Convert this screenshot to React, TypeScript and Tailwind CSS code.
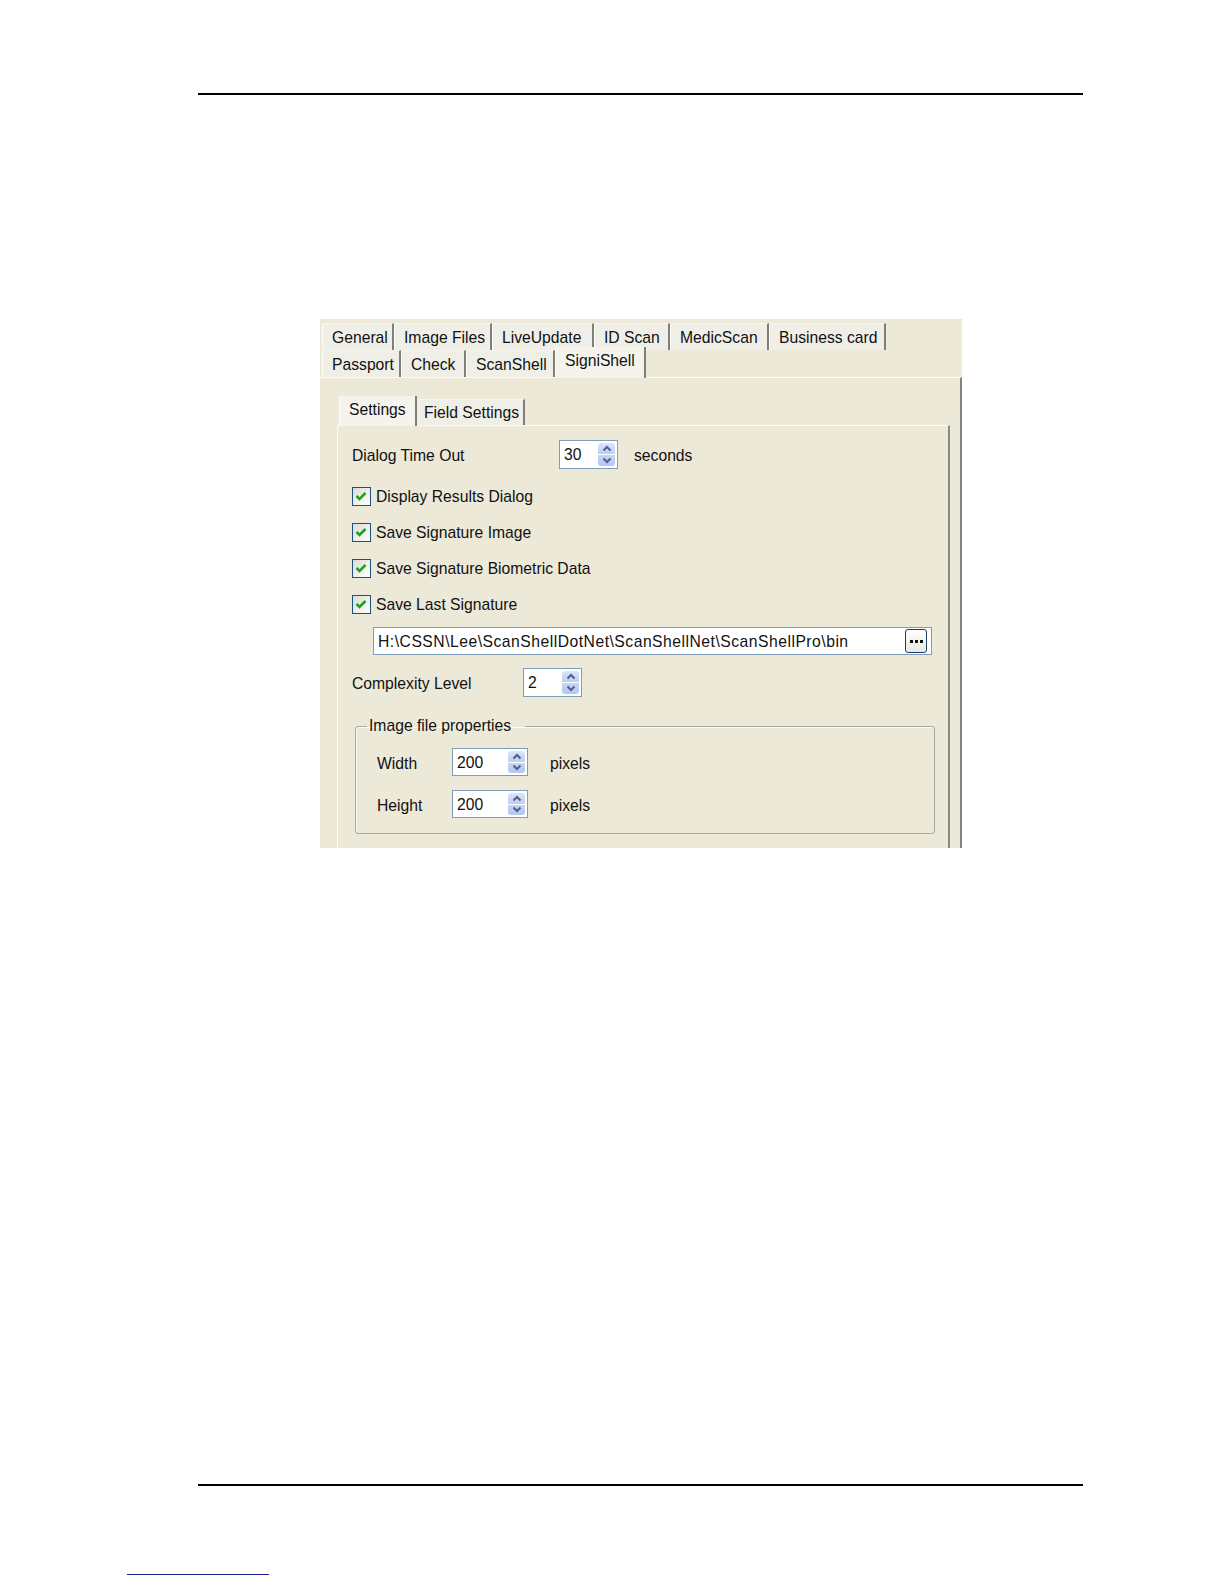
import React from "react";

// multi-row tab strip of the options dialog
const rowOne = [
  { label: "General", w: "w-[72px]" },
  { label: "Image Files", w: "w-[98px]" },
  { label: "LiveUpdate", w: "w-[102px]" },
  { label: "ID Scan", w: "w-[76px]" },
  { label: "MedicScan", w: "w-[99px]" },
  { label: "Business card", w: "w-[117px]" },
];

const rowTwo = [
  { label: "Passport", w: "w-[79px]" },
  { label: "Check", w: "w-[65px]" },
  { label: "ScanShell", w: "w-[89px]" },
];

const checks = [
  "Display Results Dialog",
  "Save Signature Image",
  "Save Signature Biometric Data",
  "Save Last Signature",
];

function Tab({ label, w, top }: { label: string; w: string; top: string }) {
  return (
    <div
      className={`${w} ${top} h-[27px] shrink-0 rounded-tl-[2px] border-l border-t border-l-[#fbfbf7] border-t-[#f7f6f1] border-r-2 border-r-[#807f76] bg-[#f0efe7] pl-[9px] whitespace-nowrap`}
    >
      {label}
    </div>
  );
}

function Arrow({ up }: { up?: boolean }) {
  return (
    <svg width="10" height="7" viewBox="0 0 10 7">
      <path
        d={up ? "M1.5 5.5 L5 2 L8.5 5.5" : "M1.5 1.5 L5 5 L8.5 1.5"}
        fill="none"
        stroke="#4d6185"
        strokeWidth="2"
      />
    </svg>
  );
}

function Spin({ value, w, h }: { value: string; w: string; h: string }) {
  return (
    <div className={`${w} ${h} flex shrink-0 items-center border border-[#7f9db9] bg-white pl-[4px] pr-[2px]`}>
      <span className="flex-1 pt-[1px]">{value}</span>
      <div className="flex h-[calc(100%-4px)] w-[17px] flex-col gap-px">
        <div className="flex flex-1 items-center justify-center rounded-t-[3px] bg-gradient-to-b from-[#dbe5fc] to-[#bccdf5]">
          <Arrow up />
        </div>
        <div className="flex flex-1 items-center justify-center rounded-b-[3px] bg-gradient-to-b from-[#c6d5f8] to-[#b3c6f2]">
          <Arrow />
        </div>
      </div>
    </div>
  );
}

function Check({ label }: { label: string }) {
  return (
    <div className="flex h-[19px] items-center">
      <div className="flex h-[19px] w-[19px] shrink-0 items-center justify-center border border-[#1c5180] bg-gradient-to-br from-[#dcdcd6] to-white">
        <svg width="17" height="17" viewBox="0 0 17 17">
          <path d="M3.5 8 L6.5 11 L12.5 5" fill="none" stroke="#21a121" strokeWidth="2.6" />
        </svg>
      </div>
      <span className="ml-[5px] whitespace-nowrap">{label}</span>
    </div>
  );
}

export default function App() {
  return (
    <div className="flex h-[1584px] w-[1224px] flex-col overflow-hidden bg-white font-['Liberation_Sans',Arial,sans-serif]">
      <div className="ml-[198px] mt-[93px] h-[2px] w-[885px] bg-black" />

      {/* dialog screenshot */}
      <div className="ml-[320px] mt-[224px] flex h-[529px] w-[642px] flex-col overflow-hidden bg-[#ece9d8] text-[15.7px] leading-[18px] text-[#111]">
        <div className="pl-[2px] pt-[4px]">
          <div className="flex h-[27px]">
            {rowOne.map((t) => (
              <Tab key={t.label} label={t.label} w={t.w} top="pt-[5px]" />
            ))}
          </div>
          <div className="flex h-[27px] items-end">
            {rowTwo.map((t) => (
              <Tab key={t.label} label={t.label} w={t.w} top="pt-[5px]" />
            ))}
            <div className="relative z-10 -mb-px h-[31px] w-[91px] shrink-0 rounded-tl-[2px] border-l border-l-[#fdfdfb] border-r-2 border-r-[#807f76] bg-[#f4f3ec] pl-[9px] pt-[5px]">
              SigniShell
            </div>
          </div>
        </div>

        <div className="flex flex-1 flex-col border-t border-r-2 border-t-[#fbfbf8] border-r-[#85847a] pl-[17px] pr-[10px] pt-[21px]">
          <div className="flex h-[26px] items-end pl-[2px]">
            <div className="relative z-10 -mb-px h-[30px] w-[78px] shrink-0 rounded-tl-[2px] border-l border-l-[#fdfdfb] border-r-2 border-r-[#807f76] bg-[#f4f3ec] pl-[9px] pt-[5px]">
              Settings
            </div>
            <div className="h-[26px] w-[108px] shrink-0 border-t border-t-[#f7f6f1] border-r-2 border-r-[#807f76] bg-[#f0efe7] pl-[7px] pt-[4px] whitespace-nowrap">
              Field Settings
            </div>
          </div>

          <div className="flex flex-1 flex-col border-l border-t border-r-2 border-l-[#fbfbf8] border-t-[#fbfbf8] border-r-[#8b8a80] pl-[14px]">
            <div className="mt-[14px] flex h-[29px] items-center">
              <span className="w-[207px] shrink-0 pt-[2px]">Dialog Time Out</span>
              <Spin value="30" w="w-[59px]" h="h-[29px]" />
              <span className="ml-[16px] pt-[2px]">seconds</span>
            </div>

            <div className="mt-[18px] flex flex-col gap-[17px]">
              {checks.map((c) => (
                <Check key={c} label={c} />
              ))}
            </div>

            <div className="ml-[21px] mt-[13px] flex h-[28px] w-[559px] items-center border border-[#7f9db9] bg-white pl-[4px] pr-[4px]">
              <span className="flex-1 whitespace-nowrap pt-[1px] tracking-[0.5px]">
                H:\CSSN\Lee\ScanShellDotNet\ScanShellNet\ScanShellPro\bin
              </span>
              <div className="flex h-[24px] w-[22px] items-center justify-center gap-[2px] rounded-[3px] border border-[#1f3a63] bg-gradient-to-b from-white to-[#e9e8e2]">
                <span className="h-[3px] w-[3px] bg-[#111]" />
                <span className="h-[3px] w-[3px] bg-[#111]" />
                <span className="h-[3px] w-[3px] bg-[#111]" />
              </div>
            </div>

            <div className="mt-[13px] flex h-[29px] items-center">
              <span className="w-[171px] shrink-0 pt-[3px]">Complexity Level</span>
              <Spin value="2" w="w-[59px]" h="h-[29px]" />
            </div>

            <fieldset className="ml-[3px] mt-[20px] w-[580px] rounded-[3px] border border-[#a9a89a] pb-[15px] pl-[11px] shadow-[inset_1px_1px_0_#fbfbf8]">
              <legend className="pl-[2px] pr-[14px] leading-[18px]">Image file properties</legend>
              <div className="ml-[10px] mt-[13px] flex h-[28px] items-center">
                <span className="w-[75px] shrink-0 pt-[3px]">Width</span>
                <Spin value="200" w="w-[76px]" h="h-[28px]" />
                <span className="ml-[22px] pt-[3px]">pixels</span>
              </div>
              <div className="ml-[10px] mt-[14px] flex h-[28px] items-center">
                <span className="w-[75px] shrink-0 pt-[3px]">Height</span>
                <Spin value="200" w="w-[76px]" h="h-[28px]" />
                <span className="ml-[22px] pt-[3px]">pixels</span>
              </div>
            </fieldset>
          </div>
        </div>
      </div>

      <div className="ml-[198px] mt-[636px] h-[2px] w-[885px] bg-black" />
      <div className="ml-[127px] mt-[88px] h-px w-[142px] bg-[#1e1e8c]" />
    </div>
  );
}
